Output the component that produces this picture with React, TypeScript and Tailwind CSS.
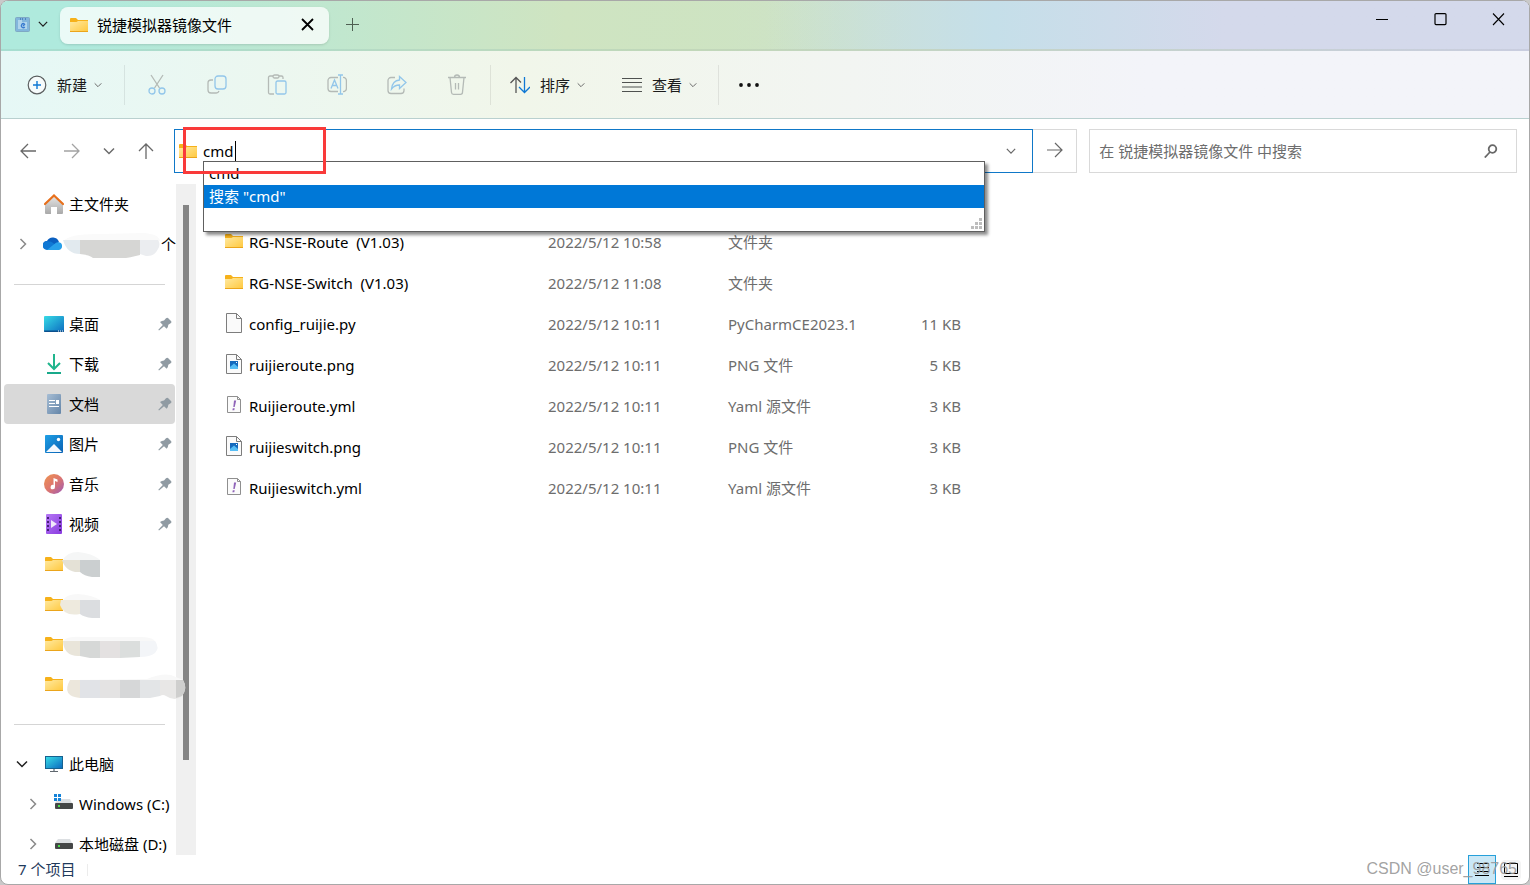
import { useState } from "react";
import type { ReactNode } from "react";

type FileKind = "folder" | "blank" | "png" | "yml";

interface FileRow {
  name: string;
  date: string;
  type: string;
  size: string;
  kind: FileKind;
}

const FILES: FileRow[] = [
  { name: "RG-NSE-Route  (V1.03)", date: "2022/5/12 10:58", type: "文件夹", size: "", kind: "folder" },
  { name: "RG-NSE-Switch  (V1.03)", date: "2022/5/12 11:08", type: "文件夹", size: "", kind: "folder" },
  { name: "config_ruijie.py", date: "2022/5/12 10:11", type: "PyCharmCE2023.1", size: "11 KB", kind: "blank" },
  { name: "ruijieroute.png", date: "2022/5/12 10:11", type: "PNG 文件", size: "5 KB", kind: "png" },
  { name: "Ruijieroute.yml", date: "2022/5/12 10:11", type: "Yaml 源文件", size: "3 KB", kind: "yml" },
  { name: "ruijieswitch.png", date: "2022/5/12 10:11", type: "PNG 文件", size: "3 KB", kind: "png" },
  { name: "Ruijieswitch.yml", date: "2022/5/12 10:11", type: "Yaml 源文件", size: "3 KB", kind: "yml" },
];

function FolderIcon() {
  return (
    <svg width="18" height="14" viewBox="0 0 18 14" className="shrink-0">
      <defs>
        <linearGradient id="folder" x1="0" y1="0" x2="1" y2="1">
          <stop offset="0" stopColor="#ffe9a0" />
          <stop offset="1" stopColor="#ffc83d" />
        </linearGradient>
      </defs>
      <path d="M0 1a1 1 0 0 1 1-1h5l2 2h10v4H0z" fill="#f6b11a" />
      <path d="M0 4h6.500l1.500-1h10v11H0z" fill="url(#folder)" />
      <path d="M0 13h18v1H0z" fill="#eba51b" />
    </svg>
  );
}

function HomeIcon() {
  return (
    <svg width="20" height="20" viewBox="0 0 20 20">
      <defs>
        <linearGradient id="house" x1="0" y1="0" x2="0" y2="1">
          <stop offset="0" stopColor="#e8e8e8" />
          <stop offset="1" stopColor="#a9a9a9" />
        </linearGradient>
      </defs>
      <path d="M1 9l9-8 9 8v10a1 1 0 0 1-1 1h-5v-7H7v7H2a1 1 0 0 1-1-1z" fill="url(#house)" />
      <path d="M1 10l9-8.500L19 10" fill="none" stroke="#e8701c" strokeWidth="2.200" strokeLinecap="round" />
    </svg>
  );
}

function CloudIcon() {
  return (
    <svg width="20" height="14" viewBox="0 0 20 14">
      <path d="M4 12a4 4 0 0 1 0-8A6.500 6.500 0 0 1 16 5l-5 5z" fill="#0a5fc0" />
      <path d="M4 13a4.400 4.400 0 1 1 1-8.700c2-.3 3.500.7 5 1.700l4 3-6 4z" fill="#0f78d4" />
      <path d="M4 13l8-6.500a5 5 0 0 1 4-1.300A4 4 0 0 1 16 13z" fill="#28a0ea" />
    </svg>
  );
}

function DesktopIcon() {
  return (
    <svg width="20" height="16" viewBox="0 0 20 16">
      <defs>
        <linearGradient id="screen" x1="0" y1="0" x2="1" y2="1">
          <stop offset="0" stopColor="#37dbe6" />
          <stop offset="1" stopColor="#0c6cc0" />
        </linearGradient>
      </defs>
      <rect width="20" height="16" rx="1" fill="url(#screen)" />
      <path d="M0 14.500h20v.5a1 1 0 0 1-1 1H1a1 1 0 0 1-1-1z" fill="#0b4f8c" />
      <path d="M14 15h1m1 0h1m1 0h1" stroke="#fff" />
    </svg>
  );
}

function DownloadIcon() {
  return (
    <svg width="16" height="20" viewBox="0 0 16 20" fill="none" strokeWidth="2">
      <path d="M8 0v14M2 9l6 6 6-6" stroke="#20b58d" />
      <path d="M1 19h14" stroke="#18a98a" />
    </svg>
  );
}

function DocumentIcon() {
  return (
    <svg width="14" height="20" viewBox="0 0 14 20">
      <defs>
        <linearGradient id="doc" x1="0" y1="0" x2="1" y2="1">
          <stop offset="0" stopColor="#a6bdd4" />
          <stop offset="1" stopColor="#6485a8" />
        </linearGradient>
      </defs>
      <rect width="14" height="20" rx="1" fill="url(#doc)" />
      <path d="M2 6.500h6M2 9.500h6M2 12.500h10" stroke="#fff" />
      <path d="M9 6h3v4H9z" fill="#fff" />
    </svg>
  );
}

function PicturesIcon() {
  return (
    <svg width="18" height="18" viewBox="0 0 18 18">
      <defs>
        <linearGradient id="pic" x1="0" y1="0" x2="1" y2="1">
          <stop offset="0" stopColor="#1fa0e6" />
          <stop offset="1" stopColor="#0a62b4" />
        </linearGradient>
      </defs>
      <rect width="18" height="18" rx="1" fill="url(#pic)" />
      <path d="M1 17l8-8 8 8z" fill="#f3f8fd" />
      <circle cx="13.500" cy="4.500" r="1.700" fill="#fff" />
    </svg>
  );
}

function MusicIcon() {
  return (
    <svg width="20" height="20" viewBox="0 0 20 20">
      <defs>
        <linearGradient id="music" x1="0" y1="0" x2="1" y2="1">
          <stop offset="0" stopColor="#ee9350" />
          <stop offset="0.500" stopColor="#dd766e" />
          <stop offset="1" stopColor="#9c59b8" />
        </linearGradient>
      </defs>
      <circle cx="10" cy="10" r="10" fill="url(#music)" />
      <path d="M9.500 4l4 1.500V8l-2.500-1v6a2.200 2.200 0 1 1-1.500-2z" fill="#fff" />
    </svg>
  );
}

function VideoIcon() {
  return (
    <svg width="16" height="20" viewBox="0 0 16 20">
      <defs>
        <linearGradient id="video" x1="0" y1="0" x2="1" y2="1">
          <stop offset="0" stopColor="#b578f4" />
          <stop offset="1" stopColor="#8a3be0" />
        </linearGradient>
      </defs>
      <rect width="16" height="20" rx="1" fill="url(#video)" />
      <path d="M2 3v15M14 3v15" stroke="#472078" strokeWidth="2" strokeDasharray="2 2" />
      <path d="M5 6l6 4-6 4z" fill="#f1e8fb" />
    </svg>
  );
}

function ComputerIcon() {
  return (
    <svg width="18" height="16" viewBox="0 0 18 16">
      <rect width="18" height="13" fill="#16618f" />
      <rect x="1" y="1" width="16" height="11" fill="url(#screen)" />
      <path d="M8 13h2v2H8z" fill="#9aa3ab" />
      <path d="M5 15.500h8" stroke="#60676e" />
    </svg>
  );
}

function DriveIcon({ system = false }: { system?: boolean }) {
  return (
    <svg width="20" height="20" viewBox="0 0 20 20">
      <path d="M5 5h12l2 4H2z" fill="#dcdfe2" />
      <rect x="2" y="9" width="18" height="6" rx="1" fill="#454747" />
      <rect x="5" y="11" width="2" height="2" fill="#4be04b" />
      {system && <path d="M1 0h3v3H1zM5 0h3v3H5zM1 4h3v3H1zM5 4h3v3H5z" fill="#1583d8" />}
    </svg>
  );
}

function PinIcon() {
  return (
    <svg width="14" height="14" viewBox="0 0 14 14" className="shrink-0">
      <path d="M8 1.200Q9 .2 10 1l3 3q1 1 0 2l-2.700 1.800q0 2.200-1.600 4L6 9.200 1 13.500l-.7-.7L4.800 7.900 2 5q1.800-1.500 4-1.500z" fill="#909ba3" />
    </svg>
  );
}

function Chevron({ size = 8, dir = "down", color = "#6b6b6b" }: { size?: number; dir?: "down" | "right"; color?: string }) {
  return (
    <svg width={size} height={size} viewBox="0 0 12 12" fill="none" stroke={color} strokeWidth="1.500">
      <path d={dir === "down" ? "M1 3.500l5 5 5-5" : "M3.500 1l5 5-5 5"} />
    </svg>
  );
}

function FileIcon({ kind }: { kind: FileKind }) {
  if (kind === "folder") return <FolderIcon />;
  if (kind === "yml") {
    return (
      <svg width="18" height="20" viewBox="0 0 18 20">
        <path d="M2.500 1.500h10l3 3v13h-13z" fill="#fbfbfb" stroke="#8f8f8f" />
        <path d="M12.500 1.500v3h3" fill="none" stroke="#8f8f8f" />
        <path d="M9 5.500h2.200L9.700 12H8.300zM7.800 13.300h1.900l-.4 1.900H7.400z" fill="#8f63b8" />
      </svg>
    );
  }
  return (
    <svg width="18" height="20" viewBox="0 0 18 20">
      <path d="M1.500.5h10l5 5v14h-15z" fill="#fafafa" stroke="#7d7d7d" />
      <path d="M11.500.5v5h5" fill="none" stroke="#7d7d7d" />
      {kind === "png" && (
        <>
          <rect x="5" y="7" width="8" height="8" fill="#1469bd" />
          <path d="M5 15v-2l4-3.500 4 3.500v2z" fill="#56bdf5" />
          <path d="M11 8h1v1h-1z" fill="#fff" />
        </>
      )}
    </svg>
  );
}

// Painted-over label, one blob per hidden name
function Smudge({ children, width }: { children: ReactNode; width: number }) {
  return (
    <svg width={width} height="26" viewBox={`0 0 ${width} 26`} className="shrink-0 overflow-visible">
      {children}
    </svg>
  );
}

function NavItem({ icon, label, pinned = false, active = false }: { icon: ReactNode; label: string; pinned?: boolean; active?: boolean }) {
  return (
    <a href="#" className={`ml-[3px] mr-px flex h-10 shrink-0 items-center rounded-sm pl-10 pr-[3px] ${active ? "bg-[#d9d9d9]" : ""}`}>
      <span className="flex w-5 justify-center">{icon}</span>
      <span className="ml-[5px] flex-1 whitespace-nowrap">{label}</span>
      {pinned && <PinIcon />}
    </a>
  );
}

function HiddenFolder({ children, gap = false }: { children: ReactNode; gap?: boolean }) {
  return (
    <a href="#" aria-label="文件夹" className="flex h-10 shrink-0 items-center pl-11">
      <FolderIcon />
      <span className={gap ? "ml-1" : "-ml-px"}>{children}</span>
    </a>
  );
}

function TreeItem({ icon, label, open = false }: { icon: ReactNode; label: string; open?: boolean }) {
  return (
    <a href="#" className={`flex h-10 shrink-0 items-center whitespace-nowrap ${open ? "pl-[15px]" : "pl-[26px]"}`}>
      <span className="flex w-3 justify-center">
        <Chevron size={12} dir={open ? "down" : "right"} color={open ? "#222" : "#8a8a8a"} />
      </span>
      <span className={`flex w-5 justify-center ${open ? "ml-4" : "ml-[14px]"}`}>{icon}</span>
      <span className={open ? "ml-[5px]" : "ml-[6px]"}>{label}</span>
    </a>
  );
}

function Sidebar() {
  return (
    <nav className="z-10 flex w-[175px] shrink-0 flex-col text-black">
      <NavItem icon={<HomeIcon />} label="主文件夹" />
      <a href="#" aria-label="OneDrive" className="flex h-10 shrink-0 items-center pl-4">
        <Chevron size={12} dir="right" color="#8a8a8a" />
        <span className="ml-[14px]"><CloudIcon /></span>
        <Smudge width={98}>
          <path d="M0 10Q8 2 40 3l40-1q16 1 17 8z" fill="#fafafa" />
          <path d="M0 9h17v14Q4 23 0 9z" fill="#e2eaef" />
          <path d="M17 9h60v15q-12 3-14 3H30q-3-3-13-4z" fill="#d6d6d4" />
          <path d="M77 9h18q3 4 0 9-4 8-12 7l-6-2z" fill="#ebedf0" />
        </Smudge>
        <span>个</span>
      </a>
      <div className="flex h-10 shrink-0 items-center pl-[13px] pr-[11px]"><hr className="w-full border-[#d5d5d5]" /></div>
      <NavItem icon={<DesktopIcon />} label="桌面" pinned />
      <NavItem icon={<DownloadIcon />} label="下载" pinned />
      <NavItem icon={<DocumentIcon />} label="文档" pinned active />
      <NavItem icon={<PicturesIcon />} label="图片" pinned />
      <NavItem icon={<MusicIcon />} label="音乐" pinned />
      <NavItem icon={<VideoIcon />} label="视频" pinned />
      <HiddenFolder>
        <Smudge width={40}>
          <path d="M1 9Q5 1 16 1q14 1 22 8z" fill="#f5f6f6" />
          <path d="M0 9h18v12Q4 22 0 9z" fill="#e4e1d6" />
          <path d="M18 9h20v17h-8q-8-1-12-5z" fill="#cbcfd0" />
        </Smudge>
      </HiddenFolder>
      <HiddenFolder>
        <Smudge width={40}>
          <path d="M1 9Q5 3 16 3q14 1 22 6z" fill="#f8f8f8" />
          <path d="M-1 9h19v14Q2 26-2 14z" fill="#eeeade" />
          <path d="M18 9h20v18h-8q-8-1-12-4z" fill="#dbdde0" />
        </Smudge>
      </HiddenFolder>
      <HiddenFolder>
        <Smudge width={98}>
          <path d="M1 10Q5 5 20 6h60q12 0 14 6z" fill="#f8f8f8" />
          <path d="M1 10h17v15Q2 26 1 10z" fill="#e9e5da" />
          <path d="M18 10h20v17H28l-10-2z" fill="#d6d8d7" />
          <path d="M38 10h20v17H38z" fill="#e4e1e1" />
          <path d="M58 10h20v16l-20 1z" fill="#dbdedd" />
          <path d="M78 10h15q5 7 0 12-5 4-15 4z" fill="#f3f5f8" />
        </Smudge>
      </HiddenFolder>
      <HiddenFolder gap>
        <Smudge width={118}>
          <path d="M4 9l76-1q14-6 24-4l12 5z" fill="#f8f8f8" />
          <path d="M3 9h10v18Q-6 25 3 9z" fill="#ece7dc" />
          <path d="M13 9h20v18H13z" fill="#e1e3e7" />
          <path d="M33 9h20v18H33z" fill="#e4e3e3" />
          <path d="M53 9h20v18H53z" fill="#d6d7d8" />
          <path d="M73 9h20v16l-10 2H73z" fill="#e3e5e7" />
          <path d="M93 9h23q5 8-1 16-7 6-16 0-3-2-6 0z" fill="#e8e7e6" />
          <path d="M109 9h7q5 8-1 16l-6 2z" fill="#cfcfce" />
        </Smudge>
      </HiddenFolder>
      <div className="flex h-10 shrink-0 items-center pl-[13px] pr-[11px]"><hr className="w-full border-[#d5d5d5]" /></div>
      <TreeItem open icon={<ComputerIcon />} label="此电脑" />
      <TreeItem icon={<DriveIcon system />} label="Windows (C:)" />
      <TreeItem icon={<DriveIcon />} label="本地磁盘 (D:)" />
    </nav>
  );
}

function TitleBar() {
  return (
    <header className="flex h-[50px] shrink-0 items-start border-b-2 border-black/5 bg-linear-to-r from-[#afeadd] via-[#cce3c3] via-45% to-[#d4d9eb]">
      <div className="flex h-full w-full bg-linear-to-r from-[#afeadd] from-5% via-[#cfe4c1] via-37% to-transparent to-60%">
        <div className="flex h-full w-full bg-linear-to-r from-transparent from-50% via-[#c5dfe9] via-65% to-[#d4d9eb] to-80%">
          <button aria-label="标签页操作" className="ml-[14px] flex h-[46px] shrink-0 items-center gap-2">
            <svg width="15" height="15" viewBox="0 0 15 15">
              <rect x="0.500" y="0.500" width="14" height="14" rx="1" fill="#82b6dc" stroke="#7fa9c4" />
              <path d="M3 3v9h9V5H7V3" fill="#b0d5ec" />
              <path d="M5 2h1M7 2h1M10 2h1" stroke="#3f76b8" strokeWidth="1.500" />
              <path d="M9.500 7A2 2 0 1 0 9.800 10M8 9l2-2" fill="none" stroke="#397bd0" strokeWidth="1.300" />
            </svg>
            <Chevron size={10} color="#222" />
          </button>
          <div className="ml-3 mt-[6px] flex h-[37px] w-[269px] shrink-0 items-center rounded-lg bg-white/75 pb-[2px] pl-[10px] pr-[15px] shadow-sm">
            <FolderIcon />
            <span className="ml-[9px] flex-1 text-black">锐捷模拟器镜像文件</span>
            <button aria-label="关闭标签页">
              <svg width="13" height="13" viewBox="0 0 13 13" stroke="#000" strokeWidth="1.800"><path d="M1 1l11 11M12 1L1 12" /></svg>
            </button>
          </div>
          <button aria-label="新建标签页" className="ml-[17px] h-[46px]">
            <svg width="13" height="13" viewBox="0 0 13 13" stroke="#4f5f52"><path d="M6.500 0v13M0 6.500h13" /></svg>
          </button>
          <div className="ml-auto mr-6 flex h-9 items-center gap-[45px]">
            <button aria-label="最小化">
              <svg width="13" height="13" viewBox="0 0 13 13" stroke="#000"><path d="M0 6.500h12" /></svg>
            </button>
            <button aria-label="最大化">
              <svg width="13" height="13" viewBox="0 0 13 13" fill="none" stroke="#000" strokeWidth="1.200"><rect x="1" y="0.600" width="11" height="11" rx="1" /></svg>
            </button>
            <button aria-label="关闭">
              <svg width="13" height="13" viewBox="0 0 13 13" stroke="#000" strokeWidth="1.100"><path d="M1 .5l11 11.500M12 .5L1 12" /></svg>
            </button>
          </div>
        </div>
      </div>
    </header>
  );
}

const GREY = "#b4bab6";
const BLUE = "#92c6ea";

const TOOLS: { label: string; icon: ReactNode }[] = [
  {
    label: "剪切",
    icon: (
      <>
        <path d="M4 1l8.500 13M16 1L7.500 14" stroke={GREY} />
        <circle cx="5" cy="17" r="3" stroke={BLUE} />
        <circle cx="15" cy="17" r="3" stroke={BLUE} />
      </>
    ),
  },
  {
    label: "复制",
    icon: (
      <>
        <path d="M6 6H4a3 3 0 0 0-3 3v7a3 3 0 0 0 3 3h5a3 3 0 0 0 3-2" stroke={GREY} />
        <rect x="8" y="2" width="11" height="13" rx="3" stroke={BLUE} />
      </>
    ),
  },
  {
    label: "粘贴",
    icon: (
      <>
        <path d="M6 2H3a1.500 1.500 0 0 0-1.500 1.500v15A1.500 1.500 0 0 0 3 20h4M12 2h2.500A1.500 1.500 0 0 1 16 3.500V5" stroke={GREY} />
        <rect x="6" y="1" width="6" height="3" rx="1.500" stroke={GREY} />
        <rect x="9" y="7" width="10" height="13" rx="1.500" stroke={BLUE} />
      </>
    ),
  },
  {
    label: "重命名",
    icon: (
      <>
        <path d="M11 3.500H4a3 3 0 0 0-3 3v8a3 3 0 0 0 3 3h7M16 3.500a3 3 0 0 1 3.400 3v8a3 3 0 0 1-3.400 3" stroke={GREY} />
        <path d="M4 14.500L7.500 6 11 14.500M5.200 11.500h4.600M13.500 1v19M11 1h5M11 20h5" stroke={BLUE} />
      </>
    ),
  },
  {
    label: "共享",
    icon: (
      <>
        <path d="M8 3.500H4a3 3 0 0 0-3 3v10a3 3 0 0 0 3 3h10a3 3 0 0 0 3-3v-2" stroke={GREY} />
        <path d="M12.500 2.500l6.500 6-6.500 6v-3.500q-5 0-8 4 1-8.500 8-9z" stroke={BLUE} />
      </>
    ),
  },
  {
    label: "删除",
    icon: (
      <>
        <path d="M1 3.500h18M3 3.500l1.500 15A2 2 0 0 0 6.500 20.300h7a2 2 0 0 0 2-2L17 3.500M7.500 3.500a2.500 2.500 0 0 1 5 0M8.500 9v6.500M11.500 9v6.500" stroke={GREY} />
      </>
    ),
  },
];

function Toolbar() {
  return (
    <div className="shrink-0 border-b border-[#b9d0cf] bg-linear-to-r from-[#e6f8f6] via-[#f1f6ea] via-34% to-[#f3f4f9] to-75%">
      <div role="toolbar" className="flex h-[67px] items-center text-[#1b1b1b]">
        <button className="ml-[26px] flex items-center">
          <svg width="20" height="20" viewBox="0 0 20 20" fill="none">
            <circle cx="10" cy="10" r="8.800" fill="#f6fbfb" stroke="#5b5f60" strokeWidth="1.200" />
            <path d="M10 6v8M6 10h8" stroke="#0f78d4" strokeWidth="1.400" />
          </svg>
          <span className="ml-[10px] mr-[7px]">新建</span>
          <Chevron />
        </button>
        <span className="ml-[22px] mr-[22px] h-10 w-px bg-black/8" />
        <div className="flex gap-10">
          {TOOLS.map((tool) => (
            <button key={tool.label} aria-label={tool.label} disabled>
              <svg width="20" height="21" viewBox="0 0 20 21" fill="none" strokeWidth="1.300">{tool.icon}</svg>
            </button>
          ))}
        </div>
        <span className="ml-[23px] mr-[19px] h-10 w-px bg-black/8" />
        <button className="flex items-center">
          <svg width="20" height="18" viewBox="0 0 20 18" fill="none" strokeWidth="1.300">
            <path d="M6 17V2M.5 7L6 1.500 11 6.500" stroke="#555" />
            <path d="M14.500 1v15M9 11l5.500 5.500L20 11" stroke="#0f78d4" />
          </svg>
          <span className="ml-[10px] mr-[7px]">排序</span>
          <Chevron />
        </button>
        <button className="ml-[37px] flex items-center">
          <svg width="20" height="14" viewBox="0 0 20 14" stroke="#4f5250">
            <path d="M0 .5h20M0 4.500h20M0 9h20M0 13.500h20" />
          </svg>
          <span className="ml-[10px] mr-[7px]">查看</span>
          <Chevron />
        </button>
        <span className="ml-[21px] mr-5 h-10 w-px bg-black/8" />
        <button aria-label="更多">
          <svg width="20" height="4" viewBox="0 0 20 4" fill="#111"><circle cx="2" cy="2" r="1.900" /><circle cx="10" cy="2" r="1.900" /><circle cx="18" cy="2" r="1.900" /></svg>
        </button>
      </div>
    </div>
  );
}

function NavArrow({ label, d, color = "#686868" }: { label: string; d: string; color?: string }) {
  return (
    <button aria-label={label}>
      <svg width="16" height="16" viewBox="0 0 16 16" fill="none" stroke={color} strokeWidth="1.300"><path d={d} /></svg>
    </button>
  );
}

function Suggestions() {
  return (
    <div role="listbox" className="absolute left-7 top-[31px] z-10 flex w-[782px] flex-col border border-[#5f5f5f] bg-white text-black shadow-[3px_3px_3px_rgba(0,0,0,0.45)]">
      <div role="option" aria-selected="false" className="flex h-[23px] items-center px-[5px] pb-[2px]">cmd</div>
      <div role="option" aria-selected="true" className="flex h-[23px] items-center bg-[#0078d7] px-[5px] pb-[2px] text-white">搜索 "cmd"</div>
      <div className="flex h-[23px] items-end justify-end p-[2px]">
        <svg width="11" height="11" viewBox="0 0 11 11" fill="#bdbdbd">
          <path d="M8 0h3v3H8zM4 4h3v3H4zM8 4h3v3H8zM0 8h3v3H0zM4 8h3v3H4zM8 8h3v3H8z" />
        </svg>
      </div>
    </div>
  );
}

function AddressRow() {
  const [path, setPath] = useState("cmd");

  return (
    <div className="flex h-[65px] shrink-0 items-start pt-[10px]">
      <div className="flex h-11 w-[173px] shrink-0 items-center gap-[23px] pl-[19px]">
        <NavArrow label="后退" d="M16 8H1M8 1L1 8l7 7" />
        <span className="ml-[5px] flex"><NavArrow label="前进" d="M0 8h15M8 1l7 7-7 7" color="#a3a3a3" /></span>
        <button aria-label="最近位置"><Chevron size={12} /></button>
        <NavArrow label="向上" d="M8 16V1M1 8l7-7 7 7" />
      </div>
      <div className="relative flex h-11 min-w-0 flex-21 items-center border border-[#0f78c8] pl-1 pr-4">
        <FolderIcon />
        <input
          aria-label="地址"
          value={path}
          onChange={(e) => setPath(e.target.value)}
          className="ml-[6px] w-8 bg-transparent text-black outline-none"
        />
        <span className="h-5 w-px bg-black" />
        <button aria-label="以前的位置" className="ml-auto"><Chevron size={10} /></button>
        <Suggestions />
        {/* highlight drawn over the typed command */}
        <div className="pointer-events-none absolute -top-[3px] left-2 z-20 h-[47px] w-[143px] border-3 border-[#f93a3a]" />
      </div>
      <button aria-label="转到" className="flex h-11 w-11 shrink-0 items-center justify-center border border-l-0 border-[#d9d9d9] pb-[3px]">
        <svg width="16" height="16" viewBox="0 0 16 16" fill="none" stroke="#686868" strokeWidth="1.200"><path d="M0 8h15M8 1l7 7-7 7" /></svg>
      </button>
      <label className="ml-3 mr-3 flex h-11 min-w-0 flex-10 items-center border border-[#d9d9d9] pl-[9px] pr-[18px]">
        <input type="search" placeholder="在 锐捷模拟器镜像文件 中搜索" aria-label="搜索" className="min-w-0 flex-1 outline-none placeholder:text-[#6d6d6d]" />
        <svg width="14" height="14" viewBox="0 0 14 14" fill="none" stroke="#686868" strokeWidth="1.800">
          <circle cx="8.500" cy="5" r="3.800" />
          <path d="M6 8L.8 13.500" />
        </svg>
      </label>
    </div>
  );
}

function FileTable() {
  return (
    <main className="min-w-0 flex-1 overflow-hidden pl-[29px] pt-[37px]">
      <table className="w-[736px] table-fixed border-collapse text-left text-[#6d6d6d]">
        <colgroup>
          <col className="w-[323px]" />
          <col className="w-[180px]" />
          <col className="w-[150px]" />
          <col />
        </colgroup>
        <tbody>
          {FILES.map((file) => (
            <tr key={file.name} className="h-[41px]">
              <td className="p-0">
                <span className="flex items-center whitespace-pre text-black">
                  <span className="pb-[2px]"><FileIcon kind={file.kind} /></span>
                  <span className="ml-[6px]">{file.name}</span>
                </span>
              </td>
              <td className="p-0">{file.date}</td>
              <td className="p-0">{file.type}</td>
              <td className="p-0 text-right">{file.size}</td>
            </tr>
          ))}
        </tbody>
      </table>
    </main>
  );
}

function StatusBar() {
  return (
    <footer className="relative flex h-[29px] shrink-0 items-center pl-[17px] pr-2 text-[#1f3a5c]">
      <span className="pb-[2px]">7 个项目</span>
      <span className="ml-3 h-3 w-px bg-[#ececec]" />
      <div className="ml-auto flex h-full items-center gap-[5px]">
        <button aria-label="详细信息" className="flex h-full w-7 items-center justify-center border border-[#26a0da] bg-[#cbe8f6]">
          <svg width="14" height="13" viewBox="0 0 14 13" stroke="#000"><path d="M2 .5h12M2 4.500h12M2 8.500h12M0 12.500h14" /></svg>
        </button>
        <button aria-label="大图标" className="flex h-5 w-5 items-center justify-center rounded-sm bg-[#f4f4f4]">
          <svg width="14" height="14" viewBox="0 0 14 14" fill="none" stroke="#000"><path d="M.5.5h13v10H.5zM0 13.500h14" /></svg>
        </button>
      </div>
      <span className="pointer-events-none absolute right-3 pb-px font-['Liberation_Sans',sans-serif] text-base text-[#979797]/90">CSDN @user_98765</span>
    </footer>
  );
}

export default function App() {
  return (
    <div className="h-screen bg-[#c9c9c9] font-['Noto_Sans','Noto_Sans_CJK_SC',sans-serif] text-[15px] leading-5">
      <div className="flex h-full flex-col overflow-hidden rounded-lg border border-[#a8a8a8] bg-white">
        <TitleBar />
        <Toolbar />
        <AddressRow />
        <div className="flex min-h-0 flex-1 overflow-hidden">
          <Sidebar />
          <div className="w-5 shrink-0 bg-[#f0f0f0] px-[7px] pb-[95px] pt-[21px]">
            <div className="h-full bg-[#858585]" />
          </div>
          <FileTable />
        </div>
        <StatusBar />
      </div>
    </div>
  );
}
